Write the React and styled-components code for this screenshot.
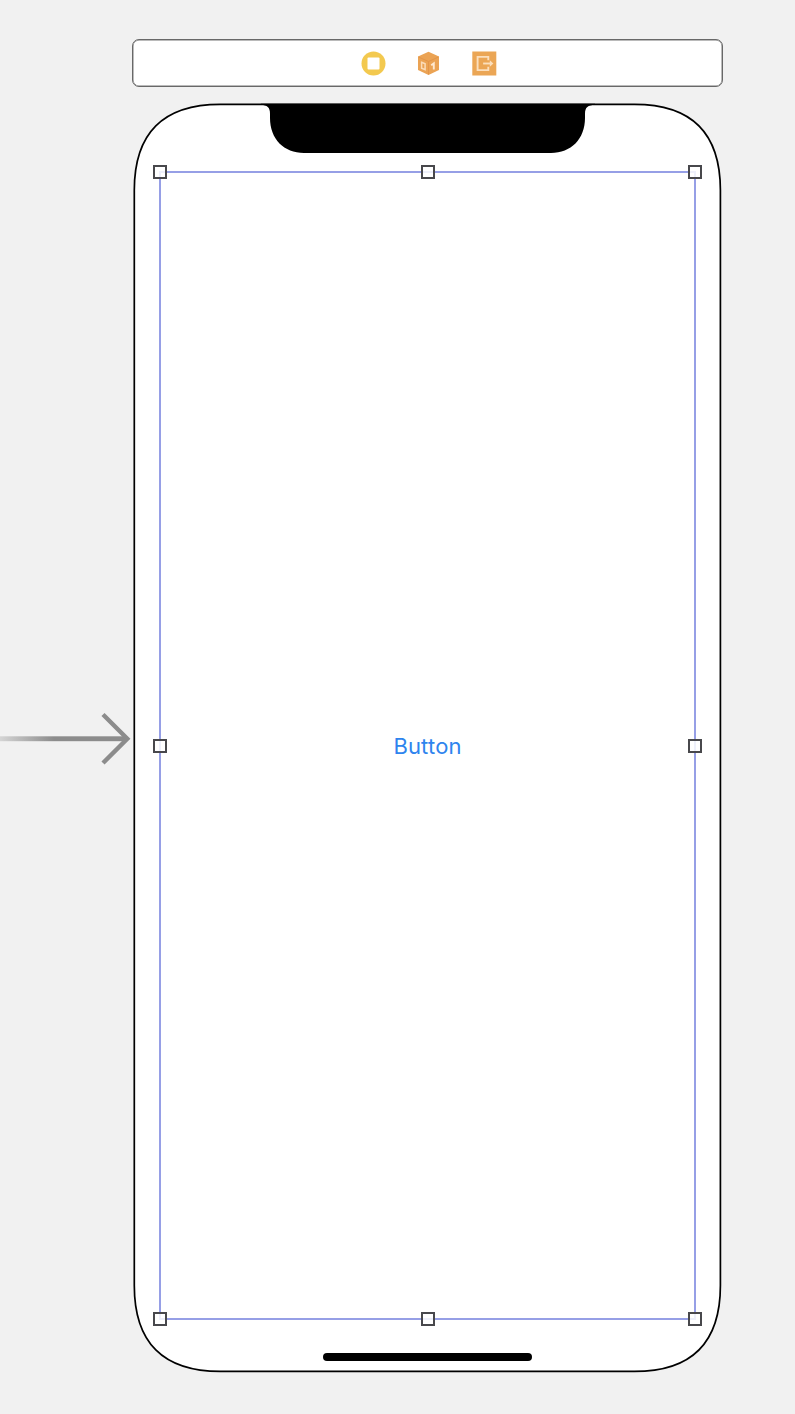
import React from 'react';
import styled, { createGlobalStyle } from 'styled-components';

const GlobalStyle = createGlobalStyle`
  * { box-sizing: border-box; }
  body { margin: 0; background: #f1f1f1; }
`;

const Canvas = styled.main`
  position: relative;
  width: 795px;
  height: 1414px;
  overflow: hidden;
  padding: 39px 0 0 132px;
  background: #f1f1f1;
`;

const SceneDock = styled.header`
  width: 591px;
  height: 48px;
  display: flex;
  align-items: center;
  justify-content: center;
  gap: 30.5px;
  padding-left: 2px;
  border: 1px solid #686868;
  border-radius: 7px;
  background: #fff;
  box-shadow: inset 0 0 0 0.5px #777;
`;

const DockIcon = styled.svg`
  display: block;
  width: 25px;
  height: 25px;
`;

const Phone = styled.section`
  position: relative;
  width: 589px;
  height: 1270px;
  margin-top: 16px;
  padding: 68px 26px 0 27px;
`;

const Bezel = styled.svg`
  position: absolute;
  inset: 0;
  width: 589px;
  height: 1270px;
  overflow: visible;
`;

const SelectedButton = styled.div`
  position: relative;
  width: 537px;
  height: 1149px;
  display: flex;
  align-items: center;
  justify-content: center;
  border: 2px solid #969fe6;
  color: #2e84ee;
  font: 400 22px/30px Inter, "Liberation Sans", sans-serif;
  font-kerning: none;
  font-variant-ligatures: none;
`;

const Handle = styled.span`
  position: absolute;
  left: ${({ $x }) => $x};
  top: ${({ $y }) => $y};
  width: 14px;
  height: 14px;
  margin: -7px 0 0 -7px;
  border: 2px solid #48484c;
  background: rgba(255, 255, 255, 0.84);
`;

const HomeIndicator = styled.div`
  position: relative;
  width: 209px;
  height: 8px;
  margin: 33px 0 0 164px;
  border-radius: 4px;
  background: #000;
`;

const EntryArrow = styled.svg`
  position: absolute;
  left: 0;
  top: 708px;
  width: 132px;
  height: 62px;
`;

const start = '-1px';
const middle = '50%';
const end = 'calc(100% + 1px)';
const handles = [
  [start, start], [middle, start], [end, start],
  [start, middle], [end, middle],
  [start, end], [middle, end], [end, end],
];

// Rounded outline whose corners flatten gradually into the straight edges.
function bezelPath(l, t, r, b) {
  const e = 86;
  const k = 28.7;
  return [
    `M${l + e} ${t}H${r - e}`,
    `C${r - k} ${t} ${r} ${t + k} ${r} ${t + e}`,
    `V${b - e}`,
    `C${r} ${b - k} ${r - k} ${b} ${r - e} ${b}`,
    `H${l + e}`,
    `C${l + k} ${b} ${l} ${b - k} ${l} ${b - e}`,
    `V${t + e}`,
    `C${l} ${t + k} ${l + k} ${t} ${l + e} ${t}Z`,
  ].join('');
}

function ControllerIcon() {
  return (
    <DockIcon viewBox="0 0 25 25">
      <circle cx="12.5" cy="12.5" r="12" fill="#f3c94f" />
      <rect x="6.5" y="6.5" width="12" height="12" rx="1" fill="#fff" />
    </DockIcon>
  );
}

function ResponderIcon() {
  return (
    <DockIcon viewBox="0 0 25 25">
      <path d="M12.5 .8 23 5.5v13.6L12.5 24 2 19.1V5.5Z" fill="#eba354" />
      <path d="m2.5 6 10 4.5 10-4.5M12.5 10.5v13" fill="none" stroke="#e3954a" strokeWidth="1" />
      <path d="m5.6 11.3 3.5 1.4v6l-3.5-1.5Z" fill="none" stroke="#fbdcb9" strokeWidth="1.5" />
      <path d="m15.2 14.2 2.6-1.8v6.2" fill="none" stroke="#ffe9d0" strokeWidth="1.9" />
    </DockIcon>
  );
}

function ExitIcon() {
  return (
    <DockIcon viewBox="0 0 25 25">
      <rect x=".3" y=".5" width="24" height="24" fill="#eba655" />
      <path d="M16.3 9.2V5.9H5.6v13.2h10.7v-3.4" fill="none" stroke="#fbdfbd" strokeWidth="1.9" />
      <path d="M11.1 12.5h8" stroke="#fbdfbd" strokeWidth="1.9" />
      <path d="m17.8 9.3 3.6 3.2-3.6 3.2Z" fill="#fbdfbd" />
    </DockIcon>
  );
}

export default function App() {
  return (
    <>
      <GlobalStyle />
      <Canvas>
        <SceneDock>
          <ControllerIcon />
          <ResponderIcon />
          <ExitIcon />
        </SceneDock>
        <Phone>
          <Bezel viewBox="0 0 589 1270">
            <path d={bezelPath(2.3, 1.3, 588.4, 1268.4)} fill="#fff" stroke="#000" strokeWidth="1.7" />
            <path d="M129 .8H463V2C456 2 453 4 453 11V15C453 36 439 50 419 50H172C152 50 138 36 138 15V11C138 4 135 2 129 2Z" fill="#000" />
          </Bezel>
          <SelectedButton>
            Button
            {handles.map(([x, y]) => <Handle key={`${x}${y}`} $x={x} $y={y} />)}
          </SelectedButton>
          <HomeIndicator />
        </Phone>
        <EntryArrow viewBox="0 0 132 62">
          <defs>
            <linearGradient id="entry" x1="0" x2="54" y1="0" y2="0" gradientUnits="userSpaceOnUse">
              <stop stopColor="#8c8c8c" stopOpacity=".28" />
              <stop offset="1" stopColor="#8c8c8c" />
            </linearGradient>
          </defs>
          <rect y="28.3" width="127" height="4.9" fill="url(#entry)" />
          <path d="m103 6.5 24.3 24.3-24.3 24.2" fill="none" stroke="#8c8c8c" strokeWidth="4.4" />
        </EntryArrow>
      </Canvas>
    </>
  );
}
